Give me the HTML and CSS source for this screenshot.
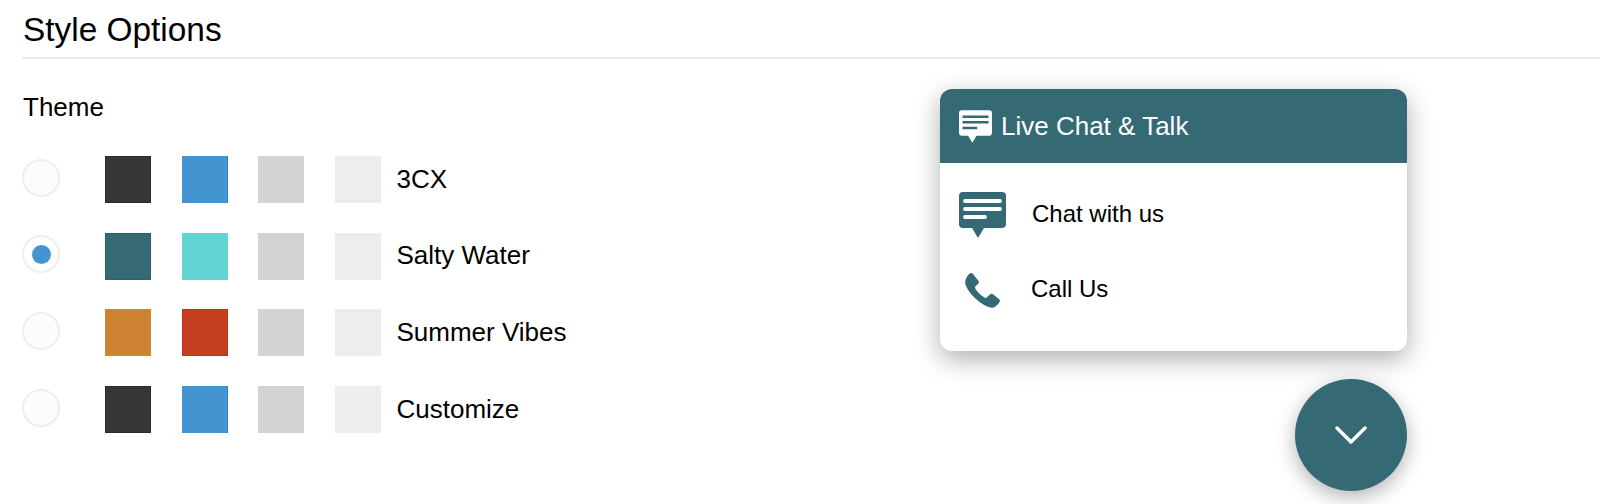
FILE: index.html
```html
<!DOCTYPE html>
<html lang="en">
<head>
<meta charset="utf-8">
<title>Style Options</title>
<link rel="stylesheet" href="styles.css">
</head>
<body>
<main class="page">
  <h1 class="title">Style Options</h1>
  <h2 class="subtitle">Theme</h2>
  <ul class="themes">
    <li class="theme"><span class="radio"></span><span class="swatch dark"></span><span class="swatch blue"></span><span class="swatch grey"></span><span class="swatch light"></span><span class="label">3CX</span></li>
    <li class="theme"><span class="radio checked"></span><span class="swatch teal"></span><span class="swatch aqua"></span><span class="swatch grey"></span><span class="swatch light"></span><span class="label">Salty Water</span></li>
    <li class="theme"><span class="radio"></span><span class="swatch orange"></span><span class="swatch red"></span><span class="swatch grey"></span><span class="swatch light"></span><span class="label">Summer Vibes</span></li>
    <li class="theme"><span class="radio"></span><span class="swatch dark"></span><span class="swatch blue"></span><span class="swatch grey"></span><span class="swatch light"></span><span class="label">Customize</span></li>
  </ul>
</main>
<aside class="widget">
  <div class="panel">
    <header class="panel-head">
      <svg class="head-icon" viewBox="0 0 47 46"><path d="M4 0h39a4 4 0 0 1 4 4v28a4 4 0 0 1-4 4H25l-6 10-6-10H4a4 4 0 0 1-4-4V4a4 4 0 0 1 4-4z" fill="#fff"/><path d="M5 9h37M5 17h37M5 25h21" stroke="#356a75" stroke-width="3.600" fill="none"/></svg>
      <span class="head-text">Live Chat &amp; Talk</span>
    </header>
    <div class="panel-body">
      <div class="option option-chat">
        <svg class="chat-icon" viewBox="0 0 47 46"><path d="M4 0h39a4 4 0 0 1 4 4v28a4 4 0 0 1-4 4H25l-6 10-6-10H4a4 4 0 0 1-4-4V4a4 4 0 0 1 4-4z" fill="#356a75"/><path d="M6 9h35M6 17h35M6 25h20" stroke="#fff" stroke-width="3.800" stroke-linecap="round" fill="none"/></svg>
        <span>Chat with us</span>
      </div>
      <div class="option option-call">
        <svg class="call-icon" viewBox="0 0 34 34"><path d="M5 0.300 C6 -0.200 7 0.200 7.800 1 L13 7.500 C13.800 8.600 13.600 9.600 12.800 10.400 L10 13 C9.500 13.600 9.600 14.300 10 15 C12.200 18.600 15 21.400 18.800 23.800 C19.800 24.400 20.600 24.300 21.300 23.600 L24.200 20.800 C25.200 19.900 26.200 19.900 27.200 20.600 L33.200 25.400 C34.100 26.200 34.200 27.200 33.500 28.100 C32 30.200 30 32.500 28 33.500 C25 34.600 20 32.500 14.500 28.500 C8 23.600 2.800 17.500 0.500 11.500 C-0.600 8 1 3.500 5 0.300 Z" fill="#356a75"/></svg>
        <span>Call Us</span>
      </div>
    </div>
  </div>
  <button class="fab" type="button" aria-label="Minimize">
    <svg class="chev" viewBox="0 0 32 20"><path d="M2 3l14 14L30 3" stroke="#fff" stroke-width="3.400" stroke-linecap="round" stroke-linejoin="round" fill="none"/></svg>
  </button>
</aside>
</body>
</html>
```

FILE: styles.css
```css
* { box-sizing: border-box; }
html, body { margin: 0; height: 504px; overflow: hidden; background: #fff; }
body { font-family: "Liberation Sans", Arial, sans-serif; color: #000; position: relative; }

.page { padding-left: 22px; }
.title {
  margin: 0;
  height: 59px;
  padding: 11px 0 0 1px;
  border-bottom: 2px solid #ebebeb;
  font-size: 33.400px;
  line-height: 37px;
  font-weight: 400;
}
.subtitle {
  margin: 0;
  padding: 35px 0 0 1px;
  font-size: 26px;
  line-height: 27px;
  font-weight: 400;
}
.themes { list-style: none; margin: 35px 0 0; padding: 0; display: flex; flex-direction: column; gap: 29.700px; }
.theme { display: flex; align-items: center; height: 47px; }
.radio {
  width: 38px; height: 38px;
  margin-right: 45px;
  margin-top: -4px;
  border-radius: 50%;
  border: 2px solid #eeeeee;
  background: #fcfcfc;
  display: flex; align-items: center; justify-content: center;
}
.radio.checked { background: #fff; }
.radio.checked::after {
  content: "";
  width: 19px; height: 19px;
  border-radius: 50%;
  background: #4394cf;
}
.swatch { width: 46px; height: 47px; margin-right: 30.500px; flex: none; }
.swatch:nth-of-type(5) { margin-right: 16px; }
.dark { background: #363636; border: 1px solid #2b2b2b; }
.blue { background: #4394cf; border-right: 1px solid #2a83c4; }
.grey { background: #d3d3d3; }
.light { background: #ededed; }
.teal { background: #356a75; border: 1px solid #2a626e; }
.aqua { background: #62d4d6; }
.orange { background: #cc8232; border: 1px solid #d48a2a; }
.red { background: #c43f1f; border: 1px solid #c0301a; }
.label { font-size: 26px; line-height: 28px; margin-top: -2px; }

.widget { position: absolute; left: 940px; top: 89px; width: 467px; }
.panel {
  height: 262px;
  border-radius: 12px;
  background: #fff;
  box-shadow: 0 8px 26px rgba(0, 0, 0, .32);
  overflow: hidden;
}
.panel-head {
  height: 74px;
  background: #356a75;
  color: #fff;
  display: flex;
  align-items: center;
  padding-left: 19px;
}
.head-icon { width: 33px; height: 33px; margin-right: 9px; flex: none; }
.head-text { font-size: 26px; line-height: 28px; margin-top: -1px; }
.panel-body { padding-top: 29px; }
.option { display: flex; align-items: center; font-size: 24px; line-height: 28px; color: #000; }
.option span { margin-top: -3px; }
.option-chat { padding-left: 19px; height: 46px; }
.option-call { padding-left: 25px; margin-top: 35px; height: 35px; }
.chat-icon { width: 47px; height: 46px; margin-right: 26px; flex: none; }
.call-icon { width: 35px; height: 35px; margin-right: 31px; flex: none; }
.fab {
  display: flex; align-items: center; justify-content: center;
  width: 112px; height: 112px;
  margin: 28px 0 0 auto;
  padding: 0;
  border: 0;
  border-radius: 50%;
  background: #356a75;
  box-shadow: 0 6px 20px rgba(0, 0, 0, .3);
}
.chev { width: 32px; height: 20px; }
```
